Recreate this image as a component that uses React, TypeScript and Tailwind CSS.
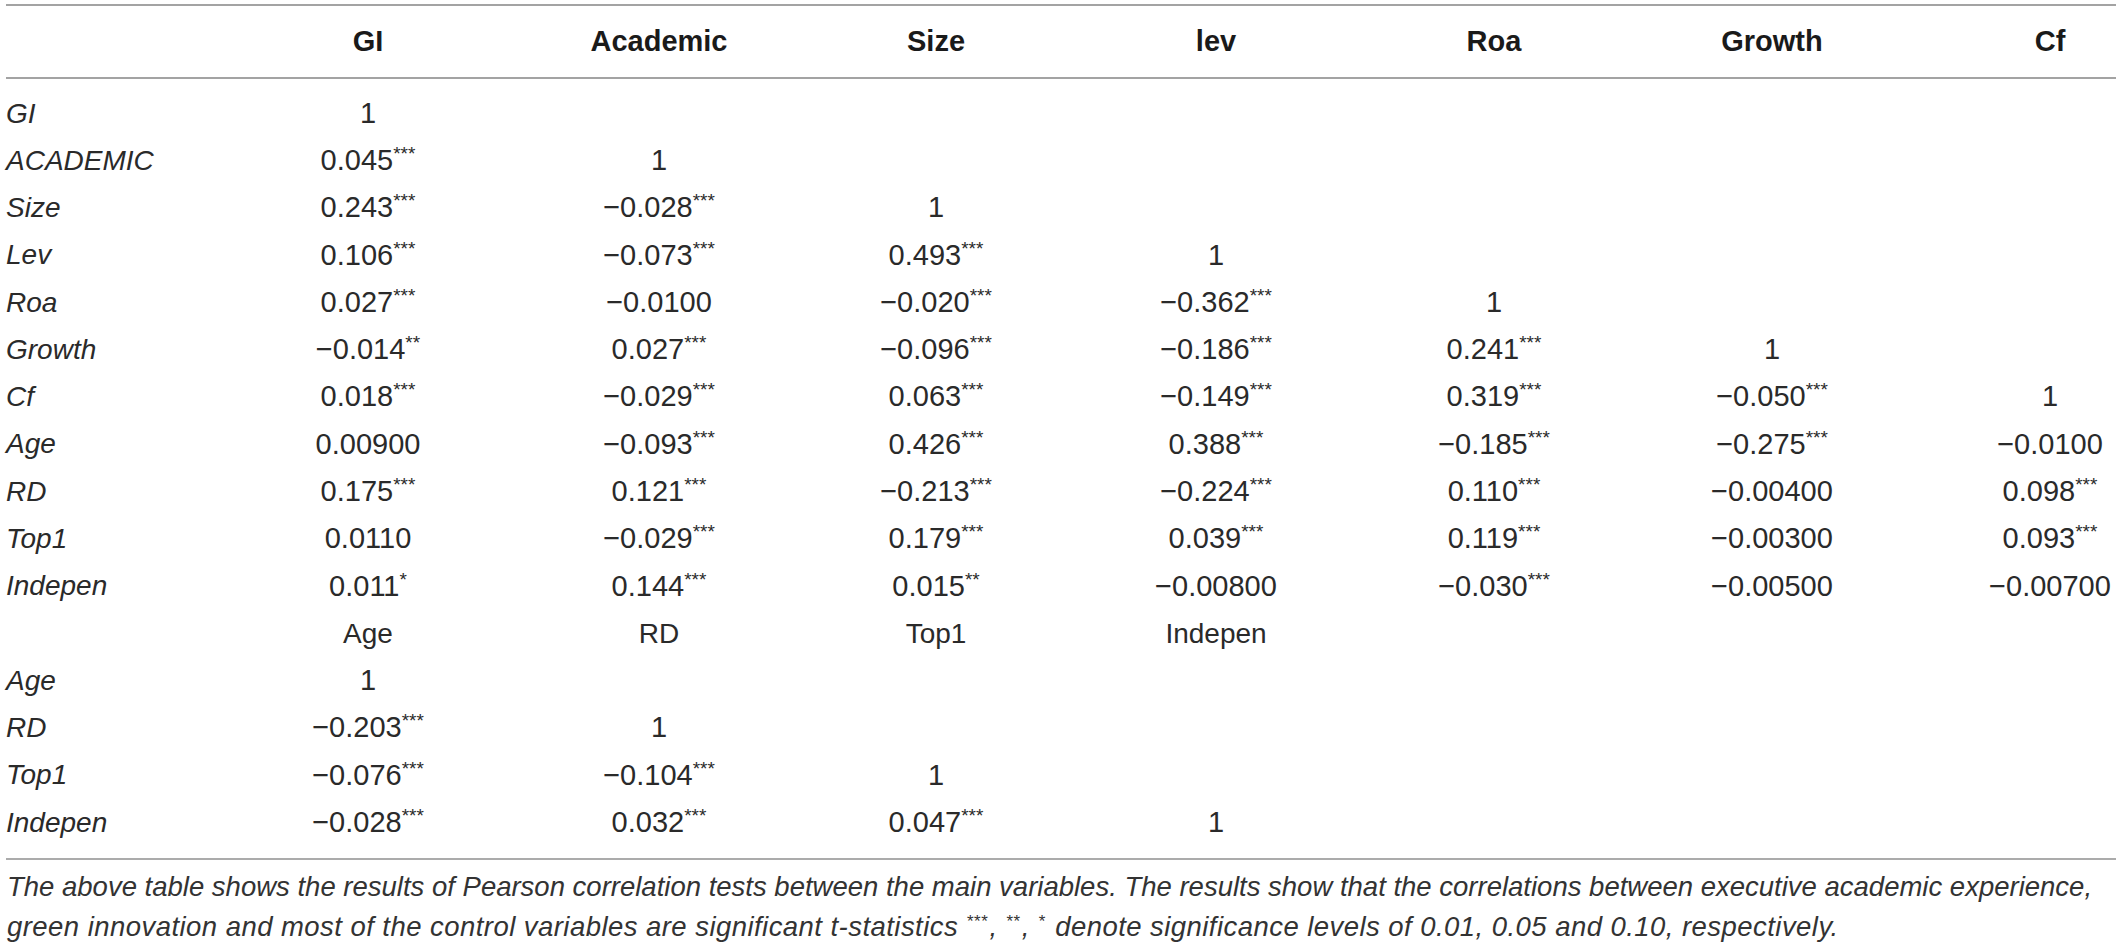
import React from "react";

const COLS = "grid grid-cols-[217px_290px_292px_262px_298px_258px_298px_195px]";

type Row = { label: string; values: string[] };

const upper: Row[] = [
  { label: "GI", values: ["1"] },
  { label: "ACADEMIC", values: ["0.045***", "1"] },
  { label: "Size", values: ["0.243***", "−0.028***", "1"] },
  { label: "Lev", values: ["0.106***", "−0.073***", "0.493***", "1"] },
  { label: "Roa", values: ["0.027***", "−0.0100", "−0.020***", "−0.362***", "1"] },
  { label: "Growth", values: ["−0.014**", "0.027***", "−0.096***", "−0.186***", "0.241***", "1"] },
  { label: "Cf", values: ["0.018***", "−0.029***", "0.063***", "−0.149***", "0.319***", "−0.050***", "1"] },
  { label: "Age", values: ["0.00900", "−0.093***", "0.426***", "0.388***", "−0.185***", "−0.275***", "−0.0100"] },
  { label: "RD", values: ["0.175***", "0.121***", "−0.213***", "−0.224***", "0.110***", "−0.00400", "0.098***"] },
  { label: "Top1", values: ["0.0110", "−0.029***", "0.179***", "0.039***", "0.119***", "−0.00300", "0.093***"] },
  { label: "Indepen", values: ["0.011*", "0.144***", "0.015**", "−0.00800", "−0.030***", "−0.00500", "−0.00700"] },
];

const lower: Row[] = [
  { label: "Age", values: ["1"] },
  { label: "RD", values: ["−0.203***", "1"] },
  { label: "Top1", values: ["−0.076***", "−0.104***", "1"] },
  { label: "Indepen", values: ["−0.028***", "0.032***", "0.047***", "1"] },
];

function Val({ v }: { v: string }) {
  const m = v.match(/^([^*]*)(\**)$/);
  const num = m ? m[1] : v;
  const stars = m ? m[2] : "";
  return (
    <span className="whitespace-nowrap">
      {num}
      {stars && <span className="text-[19px] align-[0.55em] leading-none">{stars}</span>}
    </span>
  );
}

function cellClass(i: number) {
  return i === 6 ? "pl-[63px] text-center" : "text-center";
}

function DataRow({ row }: { row: Row }) {
  return (
    <div className={`${COLS} h-[47.27px] items-center`}>
      <div className="italic text-[28px] text-[#2a2a2a]">{row.label}</div>
      {Array.from({ length: 7 }).map((_, i) => (
        <div key={i} className={`${cellClass(i)} text-[29px] text-[#2a2a2a]`}>
          {row.values[i] ? <Val v={row.values[i]} /> : null}
        </div>
      ))}
    </div>
  );
}

export default function App() {
  const heads = ["GI", "Academic", "Size", "lev", "Roa", "Growth", "Cf"];
  const sub = ["Age", "RD", "Top1", "Indepen"];
  return (
    <div
      className="w-[2120px] h-[944px] bg-white overflow-hidden pt-[4px] pl-[6px]"
      style={{ fontFamily: '"Liberation Sans", Arial, Helvetica, sans-serif' }}
    >
      <div className="w-[2110px]">
        <div className="border-t-2 border-b-2 border-[#a3a3a3]">
          <div className={`${COLS} h-[71px] items-center`}>
            <div />
            {heads.map((h, i) => (
              <div key={h} className={`${cellClass(i)} font-bold text-[29px] text-[#1a1a1a]`}>
                {h}
              </div>
            ))}
          </div>
        </div>
        <div className="pt-[11px] pb-[12px] border-b-2 border-[#ababab]">
          {upper.map((r, i) => (
            <DataRow key={"u" + i} row={r} />
          ))}
          <div className={`${COLS} h-[47.27px] items-center`}>
            <div />
            {sub.map((s) => (
              <div key={s} className="text-center text-[28px] text-[#2a2a2a]">
                {s}
              </div>
            ))}
          </div>
          {lower.map((r, i) => (
            <DataRow key={"l" + i} row={r} />
          ))}
        </div>
        <p className="mt-[7px] italic text-[27.5px] leading-[40px] text-[#333] pl-[1px] whitespace-nowrap">
          The above table shows the results of Pearson correlation tests between the main variables. The results show that
          the correlations between executive academic experience,
          <br />
          <span className="tracking-[0.45px]">
            green innovation and most of the control variables are significant t-statistics{" "}
            <span className="text-[17px] align-[0.55em] leading-none mr-[2px]">***</span>,{" "}
            <span className="text-[17px] align-[0.55em] leading-none mr-[2px]">**</span>,{" "}
            <span className="text-[17px] align-[0.55em] leading-none mr-[2px]">*</span> denote significance levels of
            0.01, 0.05 and 0.10, respectively.
          </span>
        </p>
      </div>
    </div>
  );
}
